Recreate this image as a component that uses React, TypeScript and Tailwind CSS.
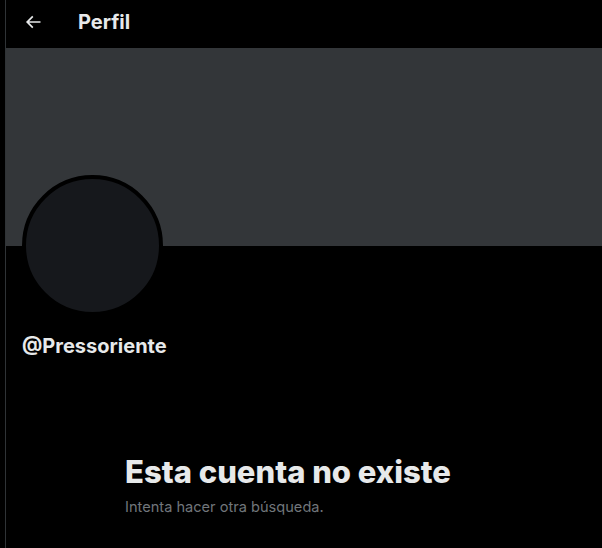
import React from "react";

function BackArrow() {
  return (
    <svg viewBox="0 0 24 24" className="w-5 h-5" fill="currentColor">
      <path d="M7.414 13l5.043 5.04-1.414 1.42L3.586 12l7.457-7.46 1.414 1.42L7.414 11H21v2H7.414z" />
    </svg>
  );
}

export default function App() {
  return (
    <div
      className="w-[602px] h-[548px] bg-black overflow-hidden"
      style={{ fontFamily: "Inter, 'Liberation Sans', sans-serif" }}
    >
      <div className="ml-[5px] h-full border-l border-[#2f3336] flex flex-col">
        {/* header */}
        <div className="h-12 pb-[5px] flex items-center text-[#e7e9ea]">
          <div className="w-[72px] pl-[17px] flex items-center">
            <BackArrow />
          </div>
          <h1 className="text-[20px] font-bold leading-6">Perfil</h1>
        </div>

        {/* banner */}
        <div className="h-[198px] bg-[#333639]" />

        {/* avatar + handle */}
        <div className="pl-4">
          <div className="w-[141px] h-[141px] -mt-[71px] rounded-full border-4 border-black bg-[#16181c]" />
          <div className="mt-[18px] text-[20px] font-bold text-[#e7e9ea] leading-6">
            @Pressoriente
          </div>
        </div>

        {/* empty state */}
        <div className="ml-[119px] mt-[96px]">
          <h2 className="text-[31px] font-extrabold text-[#e7e9ea] leading-9">
            Esta cuenta no existe
          </h2>
          <p className="mt-[7px] text-[14.6px] text-[#71767b] leading-5">
            Intenta hacer otra búsqueda.
          </p>
        </div>
      </div>
    </div>
  );
}
